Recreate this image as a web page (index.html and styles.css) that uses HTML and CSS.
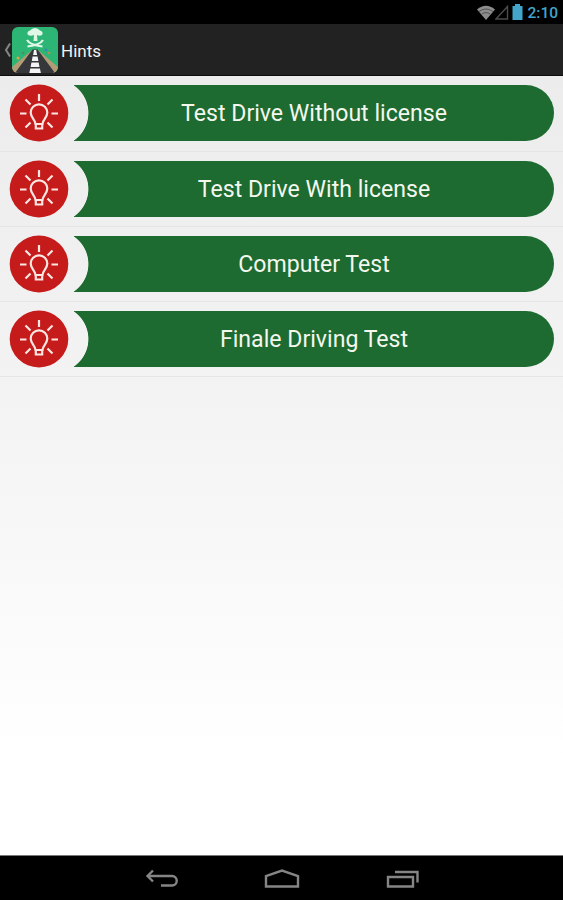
FILE: index.html
```html
<!DOCTYPE html>
<html lang="en">
<head>
  <meta charset="UTF-8" />
  <meta name="viewport" content="width=device-width, initial-scale=1.0" />
  <title>Hints</title>
  <link rel="stylesheet" href="styles.css">
</head>
<body>
  <svg width="0" height="0" class="defs">
    <symbol id="bulb" viewBox="0 0 60 58">
      <ellipse cx="30" cy="29" rx="29.3" ry="28.4" fill="#c61b1b"/>
      <g fill="none" stroke="#fbe6e2" stroke-width="2.200">
        <path d="M30 10v7M11 29.500h6.500M42.500 29.500H49M16.500 15.500l5 5M43.500 15.500l-5 5M16.500 43.500l5-5M43.500 43.500l-5-5"/>
        <path d="M26.500 40c0-4-4.800-6-4.800-11.400a8.300 8.300 0 0 1 16.600 0c0 5.400-4.800 7.400-4.800 11.400zM26.800 40v4.500h6.400V40"/>
      </g>
    </symbol>
  </svg>

  <div class="status-bar">
    <svg class="wifi" width="20" height="15" viewBox="0 0 20 15">
      <path d="M1 4.500Q10-3 19 4.500L10 15z" fill="#8c8c8c"/>
      <path d="M3 6.500q7-5 14 0M5.500 9.200q4.500-3.200 9 0" fill="none" stroke="#444" stroke-width=".8"/>
    </svg>
    <svg class="signal" width="14" height="15" viewBox="0 0 14 15">
      <path d="M1 14L12.500 1.500V14z" fill="none" stroke="#4c4c4c" stroke-width="1.400"/>
    </svg>
    <svg class="battery" width="11" height="16" viewBox="0 0 11 16">
      <path d="M.5 2H3V0h5v2h2.500v14H.5z" fill="#43a5cc"/>
    </svg>
    <span class="clock">2:10</span>
  </div>

  <div class="action-bar">
    <svg class="up" width="7" height="14" viewBox="0 0 7 14">
      <path d="M6 .5L2 7l4 6.500" fill="none" stroke="#858585" stroke-width="2"/>
    </svg>
    <svg class="logo" width="46" height="46" viewBox="0 0 46 46">
      <clipPath id="round"><rect width="46" height="46" rx="6"/></clipPath>
      <g clip-path="url(#round)">
        <rect width="46" height="46" fill="#2cb574"/>
        <path d="M20 23L0 40v6h46v-6L26 23z" fill="#b39c75"/>
        <path d="M20.500 22.500L3 46h40L25.500 22.500z" fill="#36373a"/>
        <path d="M22 23h2.200l.9 5h-4zM20.600 29.500h5l.8 4.500h-6.600zM19.400 35.500h7.300l.8 4.500h-8.900zM18.300 41.500h9.600l1 4.500H17.300z" fill="#f4f4f4"/>
        <path d="M16 8q-2-3 2-4.500 2-2.500 5-2.500t5 2.500q4 1.500 2 4.500-2.500 1.500-5 0l.5 6h-4l.5-6q-3.500 1.500-6 0z" fill="#dff7e7"/>
        <path d="M15 13q3 5 15.500 6.500M31 13q-3 5-15.500 6.500" fill="none" stroke="#dff7e7" stroke-width="2.200"/>
        <circle cx="34" cy="23" r="1.300" fill="#3a83c4"/>
        <circle cx="37" cy="26" r="1.300" fill="#b58a54"/>
        <circle cx="11" cy="26" r="1.300" fill="#4d9157"/>
        <circle cx="6" cy="31" r="1.500" fill="#dba746"/>
      </g>
    </svg>
    <h1>Hints</h1>
  </div>

  <ul class="hints">
    <li>
      <svg class="icon"><use href="#bulb"/></svg>
      <div class="pill"><span>Test Drive Without license</span></div>
    </li>
    <li>
      <svg class="icon"><use href="#bulb"/></svg>
      <div class="pill"><span>Test Drive With license</span></div>
    </li>
    <li>
      <svg class="icon"><use href="#bulb"/></svg>
      <div class="pill"><span>Computer Test</span></div>
    </li>
    <li>
      <svg class="icon"><use href="#bulb"/></svg>
      <div class="pill"><span>Finale Driving Test</span></div>
    </li>
  </ul>

  <div class="nav-bar">
    <svg width="34" height="20" viewBox="0 0 34 20">
      <path d="M9 1.500L3.500 7 9 12.500M3.500 7H28a4.700 4.700 0 0 1 0 9.500H17" fill="none" stroke="#858585" stroke-width="2.400"/>
    </svg>
    <svg width="36" height="20" viewBox="0 0 36 20">
      <path d="M2 17.500V7L18 1.500 34 7v10.500z" fill="none" stroke="#858585" stroke-width="2.400"/>
    </svg>
    <svg width="34" height="20" viewBox="0 0 34 20">
      <path d="M2 8h25v9.500H2zM9 3h22.500v10.500" fill="none" stroke="#858585" stroke-width="2.400"/>
    </svg>
  </div>
</body>
</html>
```

FILE: styles.css
```css
* {
  box-sizing: border-box;
  margin: 0;
  padding: 0;
}

body {
  height: 100vh;
  overflow: hidden;
  display: flex;
  flex-direction: column;
  font-family: Roboto, sans-serif;
  background: linear-gradient(#ececec 76px, #f3f3f3 400px, #fff 760px);
}

.defs {
  position: absolute;
}

.status-bar {
  height: 24px;
  background: #000;
  display: flex;
  align-items: center;
  justify-content: flex-end;
  padding-right: 5px;
}

.wifi {
  margin-right: -1px;
}

.battery {
  margin-left: 3px;
}

.clock {
  color: #43a5cc;
  font-size: 15.5px;
  font-weight: 500;
  line-height: 24px;
  margin-left: 4px;
  padding-top: 1px;
}

.action-bar {
  height: 52px;
  background: #222;
  border-bottom: 1px solid #0c0c0c;
  display: flex;
  align-items: center;
  padding-left: 4px;
}

.logo {
  margin: 0 3px 0 1px;
}

h1 {
  color: #f3f3f3;
  font-size: 17px;
  font-weight: 400;
  padding-top: 2px;
}

.hints {
  flex: 1;
  list-style-type: none;
  padding-top: 0.3px;
}

.hints li {
  height: 75.3px;
  display: flex;
  align-items: center;
  padding: 0 9px;
  border-bottom: 1px solid #e5e5e5;
}

.icon {
  width: 60px;
  height: 58px;
}

.pill {
  flex: 1;
  height: 56px;
  margin-left: 5px;
  padding-top: 1px;
  border-radius: 0 28px 28px 0;
  background: radial-gradient(circle at -19px 50%, transparent 33px, #1d6b30 33.8px);
  display: flex;
  align-items: center;
  justify-content: center;
  color: #f4f7ee;
  font-size: 23.1px;
}

.nav-bar {
  height: 45px;
  background: #000;
  border-top: 1px solid #777;
  display: flex;
  align-items: center;
  justify-content: center;
  gap: 86px;
  padding-top: 2px;
}
```
